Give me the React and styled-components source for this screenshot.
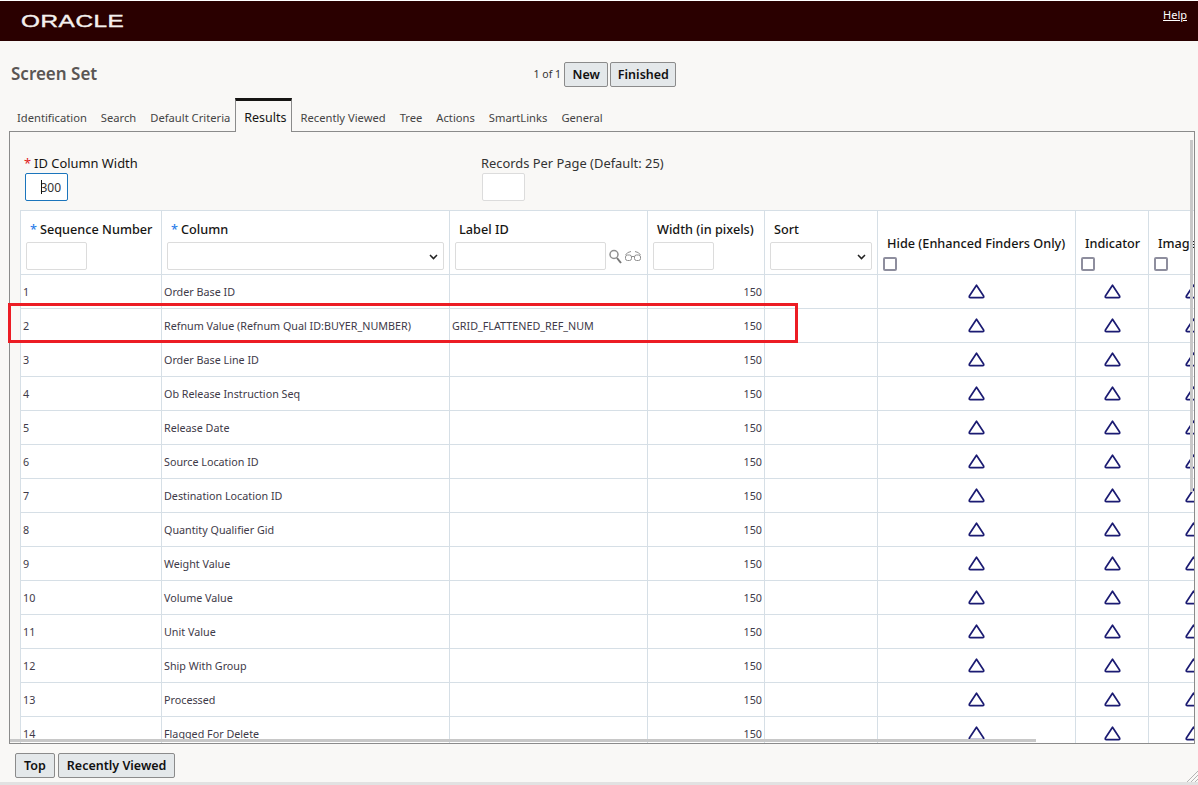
import React from "react";
import styled, { createGlobalStyle } from "styled-components";

const GlobalStyle = createGlobalStyle`
  html, body {
    margin: 0;
    height: 100%;
    overflow: hidden;
    background: #f9f8f6;
    font-family: "Noto Sans", "Open Sans", sans-serif;
  }
`;

const Page = styled.div`
  position: relative;
  height: 785px;
  display: flex;
  flex-direction: column;
  border-top: 1px solid #fff;
  box-sizing: border-box;
`;

const Header = styled.header`
  height: 40px;
  flex: none;
  background: #2a0000;
  display: flex;
  justify-content: space-between;
  padding: 0 11px 0 21px;
`;

const Logo = styled.span`
  color: #f4f0ee;
  font-family: "Liberation Sans", sans-serif;
  font-size: 17px;
  line-height: 41px;
  letter-spacing: 0.4px;
  -webkit-text-stroke: 0.4px #f4f0ee;
  transform: scaleX(1.43);
  transform-origin: left center;
  height: 40px;
`;

const HelpLink = styled.a`
  color: #fff;
  font-size: 11px;
  line-height: 28px;
  text-decoration: underline;
`;

const TitleRow = styled.div`
  height: 57px;
  flex: none;
  display: grid;
  grid-template-columns: 1fr auto 1fr;
  align-items: center;
  padding: 8px 0 0 11px;
  box-sizing: border-box;
`;

const Title = styled.h1`
  margin: 0;
  font-size: 17px;
  font-weight: 600;
  color: #5a5654;
`;

const Pager = styled.div`
  display: flex;
  align-items: center;
  gap: 2px;
  font-size: 10.5px;
  color: #333;
  padding: 1px 0 0 1px;
`;

const PagerText = styled.span`
  margin-right: 1px;
`;

const Button = styled.button`
  height: 25px;
  padding: 0 ${(p) => p.$pad || 8}px;
  background: #e4e8ea;
  border: 1px solid #8b8b8b;
  border-radius: 2px;
  font-family: inherit;
  font-size: 12.5px;
  font-weight: 600;
  color: #111;
`;

const Tabs = styled.nav`
  height: 33px;
  flex: none;
  display: flex;
  padding-left: 10px;
  box-sizing: border-box;
  position: relative;
  z-index: 1;
`;

const Tab = styled.a`
  padding: 0 7px;
  font-size: 11.2px;
  line-height: 39px;
  color: #444;
  white-space: nowrap;
  box-sizing: border-box;
  height: 34px;
  ${(p) =>
    p.$active &&
    `
    color: #161513;
    font-size: 12.5px;
    line-height: 33px;
    padding: 0 4px 0 8px;
    margin: 0 2px 0 -2px;
    background: #f9f8f6;
    border: 1px solid #8b8b8b;
    border-top: 3px solid #161513;
    border-bottom: none;
  `}
`;

const Panel = styled.section`
  position: relative;
  flex: 1;
  min-height: 0;
  margin: 0 3px 0 9px;
  border: 1px solid #8b8b8b;
  overflow: hidden;
`;

const FormRow = styled.div`
  display: grid;
  grid-template-columns: 456px auto;
  justify-content: start;
  padding: 23px 0 9px 15px;
`;

const Field = styled.div`
  display: flex;
  flex-direction: column;
  align-items: flex-start;
`;

const FieldLabel = styled.label`
  font-size: 12.9px;
  line-height: 17px;
  color: #333;
  ${(p) => p.$required && "margin-left: -1px; color: #161513;"}
`;

const Star = styled.span`
  color: ${(p) => p.$color};
  margin-right: 3px;
`;

const TextInput = styled.input`
  box-sizing: border-box;
  display: block;
  width: ${(p) => p.$width}px;
  height: 28px;
  margin: ${(p) => p.$top || 0}px 0 0 ${(p) => p.$left || 0}px;
  border: 1px solid #dcdcdc;
  border-radius: 2px;
  background: #fff;
  padding: 0 5px;
  font-family: inherit;
  font-size: 12px;
  color: #333;
  outline: none;
  text-align: right;
`;

const FocusedWrap = styled.div`
  position: relative;
  margin-top: 1px;
  &::after {
    content: "";
    position: absolute;
    left: 16px;
    top: 7px;
    width: 1px;
    height: 14px;
    background: #111;
  }
`;

const FocusedInput = styled(TextInput)`
  border-color: #1b75bc;
  padding-right: 6px;
`;

const TableWrap = styled.div`
  margin-left: 10px;
  width: 1218px;
  background: #fff;
`;

const Table = styled.table`
  table-layout: fixed;
  width: 1218px;
  border-collapse: collapse;
  background: #fff;
`;

const Th = styled.th`
  height: 64px;
  box-sizing: border-box;
  border: 1px solid #d6dfe6;
  border-right: 0;
  padding: 0 4px 4px 5px;
  vertical-align: bottom;
  text-align: left;
  font-size: 12.7px;
  font-weight: 500;
  line-height: 17px;
  color: #161513;
  white-space: nowrap;
  overflow: hidden;
`;

const ThLabel = styled.div`
  margin: 0 0 4px 4px;
`;

const Td = styled.td`
  height: 34px;
  box-sizing: border-box;
  border: 1px solid #d6dfe6;
  border-right: 0;
  padding: 0 2px;
  font-size: 10.75px;
  color: #3e3a48;
  white-space: nowrap;
  text-align: ${(p) => p.$align || "left"};
  line-height: 16px;
`;

const SelectWrap = styled.div`
  position: relative;
  width: ${(p) => p.$width}px;
`;

const SelectBox = styled.select`
  display: block;
  box-sizing: border-box;
  width: 100%;
  height: 28px;
  appearance: none;
  border: 1px solid #dcdcdc;
  border-radius: 2px;
  background-color: #fff;
  font-family: inherit;
  font-size: 12px;
`;

const Chevron = styled.svg`
  position: absolute;
  right: 6px;
  top: 12px;
  pointer-events: none;
`;

const LookupRow = styled.div`
  display: flex;
  align-items: center;
  gap: 3px;
`;

const Check = styled.span`
  display: block;
  box-sizing: border-box;
  width: 14px;
  height: 14px;
  margin-bottom: -1px;
  background: #fff;
  border: 2px solid #8e8e9e;
  border-radius: 2px;
`;

const CheckLabel = styled.div`
  margin: 0 0 5px 4px;
`;

const TriangleIcon = styled.svg`
  display: block;
  margin: 0 auto;
`;

const HBar = styled.div`
  position: absolute;
  left: 0;
  bottom: 1px;
  width: 1026px;
  height: 3px;
  background: #c8c8c8;
`;

const VBar = styled.div`
  position: absolute;
  top: 8px;
  right: 1px;
  width: 3px;
  height: 352px;
  background: #c8c8c8;
`;

const RedBox = styled.div`
  position: absolute;
  left: 8px;
  top: 302px;
  width: 790px;
  height: 40px;
  box-sizing: border-box;
  border: 3px solid #ec1c24;
  pointer-events: none;
`;

const Footer = styled.footer`
  height: 38px;
  flex: none;
  box-sizing: border-box;
  display: flex;
  gap: 3px;
  padding: 9px 0 0 15px;
  position: relative;
`;

const Strip = styled.div`
  height: 3px;
  flex: none;
  background: #e2e2e2;
`;

const ResizeGrip = styled.svg`
  position: absolute;
  right: 0;
  bottom: 0;
`;

const columns = [141, 288, 198, 117, 113, 198, 73, 90];

const rows = [
  "Order Base ID",
  "Refnum Value (Refnum Qual ID:BUYER_NUMBER)",
  "Order Base Line ID",
  "Ob Release Instruction Seq",
  "Release Date",
  "Source Location ID",
  "Destination Location ID",
  "Quantity Qualifier Gid",
  "Weight Value",
  "Volume Value",
  "Unit Value",
  "Ship With Group",
  "Processed",
  "Flagged For Delete",
];

function Triangle() {
  return (
    <TriangleIcon width="17" height="15" viewBox="0 0 17 15" fill="none">
      <path
        d="M8.5 1.2 L15.6 12 Q16.2 13.6 14.6 13.6 H2.4 Q0.8 13.6 1.4 12 Z"
        stroke="#1b1b72"
        strokeWidth="1.7"
        strokeLinejoin="round"
      />
    </TriangleIcon>
  );
}

function Select({ width }) {
  return (
    <SelectWrap $width={width}>
      <SelectBox />
      <Chevron width="9" height="6" viewBox="0 0 9 6" fill="none">
        <path d="M1 1 L4.5 4.6 L8 1" stroke="#222" strokeWidth="1.5" />
      </Chevron>
    </SelectWrap>
  );
}

function SearchIcon() {
  return (
    <svg width="13" height="15" viewBox="0 0 13 15" fill="none">
      <circle cx="5" cy="5.5" r="4" stroke="#8f8f8f" strokeWidth="1.5" />
      <path d="M8 9 L12 14" stroke="#777" strokeWidth="2" />
    </svg>
  );
}

function GlassesIcon() {
  return (
    <svg width="16" height="12" viewBox="0 0 16 12" fill="none" stroke="#8f8f8f" strokeWidth="1">
      <rect x="0.5" y="5" width="6" height="5.5" rx="2" />
      <rect x="9.5" y="5" width="6" height="5.5" rx="2" />
      <path d="M6.5 6.5 H9.5 M0.5 5 Q2 2 6 1.5 M15.5 5 Q14 2 10 1.5" />
    </svg>
  );
}

export default function App() {
  return (
    <Page>
      <GlobalStyle />
      <Header>
        <Logo>ORACLE</Logo>
        <HelpLink>Help</HelpLink>
      </Header>
      <TitleRow>
        <Title>Screen Set</Title>
        <Pager>
          <PagerText>1 of 1</PagerText>
          <Button $pad={7.5}>New</Button>
          <Button $pad={6.5}>Finished</Button>
        </Pager>
      </TitleRow>
      <Tabs>
        <Tab>Identification</Tab>
        <Tab>Search</Tab>
        <Tab>Default Criteria</Tab>
        <Tab $active>Results</Tab>
        <Tab>Recently Viewed</Tab>
        <Tab>Tree</Tab>
        <Tab>Actions</Tab>
        <Tab>SmartLinks</Tab>
        <Tab>General</Tab>
      </Tabs>
      <Panel>
        <FormRow>
          <Field>
            <FieldLabel $required>
              <Star $color="#e0201c">*</Star>ID Column Width
            </FieldLabel>
            <FocusedWrap>
              <FocusedInput $width={43} defaultValue="300" />
            </FocusedWrap>
          </Field>
          <Field>
            <FieldLabel>Records Per Page (Default: 25)</FieldLabel>
            <TextInput $width={43} $top={1} $left={1} />
          </Field>
        </FormRow>
        <TableWrap>
          <Table>
            <colgroup>
              {columns.map((w, i) => (
                <col key={i} style={{ width: w }} />
              ))}
            </colgroup>
            <thead>
              <tr>
                <Th>
                  <ThLabel>
                    <Star $color="#2b7de9">*</Star>Sequence Number
                  </ThLabel>
                  <TextInput $width={61} />
                </Th>
                <Th>
                  <ThLabel>
                    <Star $color="#2b7de9">*</Star>Column
                  </ThLabel>
                  <Select width={277} />
                </Th>
                <Th>
                  <ThLabel>Label ID</ThLabel>
                  <LookupRow>
                    <TextInput $width={151} />
                    <SearchIcon />
                    <GlassesIcon />
                  </LookupRow>
                </Th>
                <Th>
                  <ThLabel>Width (in pixels)</ThLabel>
                  <TextInput $width={61} />
                </Th>
                <Th>
                  <ThLabel>Sort</ThLabel>
                  <Select width={102} />
                </Th>
                <Th>
                  <CheckLabel>Hide (Enhanced Finders Only)</CheckLabel>
                  <Check />
                </Th>
                <Th>
                  <CheckLabel>Indicator</CheckLabel>
                  <Check />
                </Th>
                <Th>
                  <CheckLabel>Image</CheckLabel>
                  <Check />
                </Th>
              </tr>
            </thead>
            <tbody>
              {rows.map((name, i) => (
                <tr key={name}>
                  <Td>{i + 1}</Td>
                  <Td>{name}</Td>
                  <Td>{i === 1 ? "GRID_FLATTENED_REF_NUM" : ""}</Td>
                  <Td $align="right">150</Td>
                  <Td />
                  <Td>
                    <Triangle />
                  </Td>
                  <Td>
                    <Triangle />
                  </Td>
                  <Td>
                    <Triangle />
                  </Td>
                </tr>
              ))}
            </tbody>
          </Table>
        </TableWrap>
        <HBar />
        <VBar />
      </Panel>
      <Footer>
        <Button>Top</Button>
        <Button>Recently Viewed</Button>
        <ResizeGrip width="11" height="11" viewBox="0 0 11 11" stroke="#b5b5b5">
          <path d="M11 0 L0 11 M11 4 L4 11 M11 8 L8 11" />
        </ResizeGrip>
      </Footer>
      <Strip />
      <RedBox />
    </Page>
  );
}
